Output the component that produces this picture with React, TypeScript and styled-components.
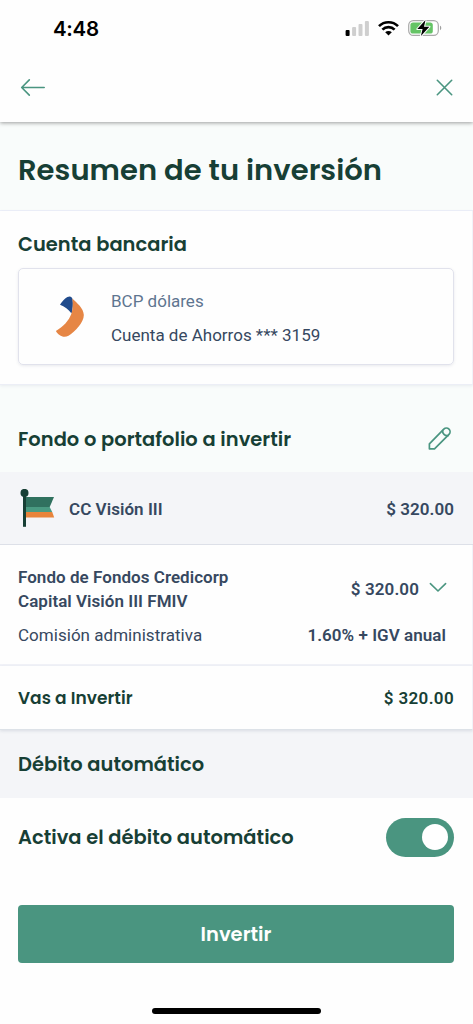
import React from "react";
import styled, { createGlobalStyle } from "styled-components";

const GlobalStyle = createGlobalStyle`
  * { box-sizing: border-box; }
  body { margin: 0; background: #fefefe; }
  h1, h2, p { margin: 0; }
  button { border: 0; padding: 0; background: none; font: inherit; cursor: pointer; }
  svg { display: block; flex: none; }
`;

const green = "#4a9580";
const ink = "#173f35";
const slate = "#364860";

const Screen = styled.main`
  display: flex;
  flex-direction: column;
  width: 473px;
  height: 1024px;
  overflow: hidden;
  background: #fefefe;
  color: ${slate};
  font: 400 17px/24px Roboto, sans-serif;
`;

const TopBar = styled.header`
  flex: none;
  height: 122px;
  background: #fefefe;
  box-shadow: 0 1px 4px rgba(0, 0, 0, 0.38);
  z-index: 1;
`;

const StatusBar = styled.div`
  display: flex;
  align-items: center;
  justify-content: space-between;
  height: 56px;
  padding: 1px 31px 0 53px;
`;

const Clock = styled.time`
  color: #000;
  font: 600 20.5px/24px Inter, sans-serif;
  letter-spacing: -0.3px;
`;

const StatusIcons = styled.div`
  display: flex;
  align-items: center;
  gap: 9px;
  padding-bottom: 1px;
`;

const NavBar = styled.nav`
  display: flex;
  align-items: center;
  justify-content: space-between;
  height: 63px;
  padding: 0 20px 0 20px;
`;

const TitleBand = styled.section`
  flex: none;
  height: 89px;
  padding: 31px 18px 0;
  background: #f9fcfb;
  border-bottom: 1px solid #edf0f9;
`;

const Heading = styled.h2<{ $size?: number }>`
  color: ${ink};
  font-family: Poppins, Inter, sans-serif;
  font-weight: 600;
  font-size: ${(p) => p.$size ?? 19.45}px;
  line-height: 34px;
  letter-spacing: 0.03px;
  white-space: nowrap;
`;

const BankSection = styled.section`
  flex: none;
  height: 174px;
  padding: 17px 18px 0;
  border-right: 1px solid #f1f2f8;
  border-bottom: 1px solid #eceef6;
  box-shadow: 0 1px 3px rgba(90, 100, 140, 0.1);
  z-index: 1;
`;

const AccountCard = styled.div`
  display: flex;
  align-items: center;
  width: 436px;
  height: 97px;
  margin-top: 6px;
  padding-left: 36px;
  border: 1.5px solid #e1e2ec;
  border-radius: 5px;
  box-shadow: 0 1px 3px rgba(80, 90, 120, 0.12);
`;

const AccountText = styled.div`
  display: flex;
  flex-direction: column;
  gap: 10px;
  margin-left: 26px;
  padding-top: 3px;
`;

const Line = styled.p<{ $muted?: boolean; $bold?: boolean; $track?: number; $color?: string }>`
  color: ${(p) => p.$color ?? (p.$muted ? "#5e7590" : slate)};
  font-weight: ${(p) => (p.$bold ? 600 : 400)};
  letter-spacing: ${(p) => p.$track ?? 0}px;
  white-space: nowrap;
`;

const FundHeader = styled.section`
  display: flex;
  flex: none;
  align-items: center;
  justify-content: space-between;
  height: 87px;
  padding: 21px 21px 0 18px;
  background: #f9fcfb;

  ${Heading} { padding-top: 2px; }
`;

const FundRow = styled.div`
  display: flex;
  flex: none;
  align-items: center;
  height: 73px;
  padding: 1px 19px 0 18px;
  background: #f4f5f8;
  border-bottom: 1px solid #dde0e8;

  > :last-child { margin-left: auto; }
`;

const FundName = styled.div`
  margin-left: 14px;
`;

const Detail = styled.section`
  flex: none;
  height: 121px;
  padding: 20px 25px 0 18px;
  border-right: 1px solid #f1f2f8;
  border-bottom: 2px solid #f2f3f9;
`;

const SplitRow = styled.div<{ $gap?: number }>`
  display: flex;
  align-items: center;
  justify-content: space-between;
  margin-top: ${(p) => p.$gap ?? 0}px;
  padding-right: ${(p) => (p.$gap ? 1 : 0)}px;
`;

const Amount = styled.div`
  display: flex;
  align-items: center;
  gap: 10px;

  svg { margin-bottom: 3px; }
`;

const TotalRow = styled.section`
  display: flex;
  flex: none;
  align-items: center;
  justify-content: space-between;
  height: 64px;
  padding: 0 18px 0;
  border-right: 1px solid #f1f2f8;
  border-bottom: 1px solid #dde2e8;
  box-shadow: 0 1px 3px rgba(60, 80, 110, 0.15);
  z-index: 1;
`;

const DebitHeader = styled.section`
  flex: none;
  height: 68px;
  padding: 18px 18px 0;
  background: #f4f5f8;
`;

const ToggleRow = styled.section`
  display: flex;
  flex: none;
  align-items: center;
  justify-content: space-between;
  height: 78px;
  padding: 0 19px 0 18px;

  ${Heading} { padding-top: 2px; }
`;

const Toggle = styled.button`
  display: flex;
  align-items: center;
  justify-content: flex-end;
  width: 68px;
  height: 39px;
  padding-right: 6px;
  border-radius: 20px;
  background: ${green};
`;

const Knob = styled.span`
  width: 26px;
  height: 26px;
  border-radius: 50%;
  background: #fff;
`;

const InvestButton = styled.button`
  flex: none;
  width: 436px;
  height: 58px;
  margin: 29px 0 0 18px;
  padding-top: 2px;
  border-radius: 4px;
  background: ${green};
  color: #fff;
  font-family: Poppins, Inter, sans-serif;
  font-weight: 600;
  font-size: 19.5px;
`;

const HomeIndicator = styled.div`
  flex: none;
  width: 169px;
  height: 6px;
  margin: 45px auto 0;
  border-radius: 3px;
  background: #000;
`;

const Signal = () => (
  <svg width="24" height="16" viewBox="0 0 24 16">
    <rect x="0.6" y="10" width="4" height="6" rx="1" fill="#000" />
    <rect x="7.1" y="7" width="4" height="9" rx="1" fill="#cfcfcf" />
    <rect x="13.5" y="4" width="4" height="12" rx="1" fill="#cfcfcf" />
    <rect x="19.9" y="0.9" width="4" height="15.1" rx="1" fill="#cfcfcf" />
  </svg>
);

const Wifi = () => (
  <svg width="21" height="16" viewBox="0 0 21 16" fill="none" stroke="#000" strokeWidth="2.7">
    <path d="M1 6.1a13.6 13.6 0 0 1 19 0" />
    <path d="M4.4 9.6a8.7 8.7 0 0 1 12.2 0" />
    <path d="M10.5 15.6 7.2 12.3a4.7 4.7 0 0 1 6.6 0Z" fill="#000" stroke="none" />
  </svg>
);

const Battery = () => (
  <svg width="34" height="18" viewBox="0 0 34 18">
    <rect x="0.7" y="1.6" width="29.6" height="14.8" rx="4.6" fill="#fff" stroke="#a9a9a9" strokeWidth="1.2" />
    <path d="M32 6.8c1.7.5 1.7 3.9 0 4.4Z" fill="#a0a0a0" />
    <rect x="2.4" y="3.4" width="22.4" height="11.2" rx="2.7" fill="#65c466" />
    <path d="M17.5.9 9.3 10.1h5.3l-1.7 7 8.5-9.3h-5.4Z" fill="#000" stroke="#fff" strokeWidth="2" strokeLinejoin="round" paintOrder="stroke" />
  </svg>
);

const BackArrow = () => (
  <svg width="26" height="20" viewBox="0 0 26 20" fill="none" stroke={green} strokeWidth="1.6" strokeLinecap="round" strokeLinejoin="round">
    <path d="M24.2 9.5H1.8M9.3 1.9 1.7 9.5l7.6 7.6" />
  </svg>
);

const Close = () => (
  <svg width="17" height="18" viewBox="0 0 17 18" fill="none" stroke={green} strokeWidth="1.6" strokeLinecap="round">
    <path d="m1.3 1.3 14.4 14.4M15.7 1.3 1.3 15.7" />
  </svg>
);

const BankLogo = () => (
  <svg width="30" height="42" viewBox="0 0 30 42">
    <path d="M5 8.8C8 3.6 12 .4 14.6.4c1.5 0 2.6 1.3 3 2.8.7 4.8.2 9.9-1.1 14.4C13.8 13.6 9.4 10.4 5 8.8Z" fill="#204b8c" />
    <path d="M17.3 2.5C22 7 28.5 12.2 28.8 18.8c.3 7-8.4 16.5-15.3 20.9C8.4 42.6 3.3 39.2.9 35 8 31.2 14 24.6 16.5 17.6 18 12.6 18.1 7.4 17.3 2.5Z" fill="#e68645" />
  </svg>
);

const Pencil = () => (
  <svg width="24" height="24" viewBox="0 0 24 24" fill="none" stroke={green} strokeWidth="1.7" strokeLinecap="round" strokeLinejoin="round">
    <path d="M1.4 21.8v-5L15.8 2.2a3.7 3.7 0 0 1 5.2 0 3.7 3.7 0 0 1 0 5.2L6.5 21.8Z" />
    <path d="M14.7 3.5c-.6 2.7 2.3 5.8 5.3 5.1" />
  </svg>
);

const Flag = () => (
  <svg width="37" height="40" viewBox="0 0 37 40">
    <path d="M7 8h29l-4.3 10H7Z" fill="#30715f" />
    <path d="M7 18h24.7l2.6 5.3H7Z" fill="#4a9b82" />
    <path d="M7 23.1h27.2l2 5.4H7Z" fill="#e8843b" />
    <path d="M5 4h3v33.8H5Z" fill={ink} />
    <circle cx="6.5" cy="3.9" r="4" fill={ink} />
  </svg>
);

const ChevronDown = () => (
  <svg width="18" height="12" viewBox="0 0 18 12" fill="none" stroke={green} strokeWidth="1.6" strokeLinecap="round" strokeLinejoin="round">
    <path d="m1.4 1.6 7.6 7.4 7.6-7.4" />
  </svg>
);

export default function App() {
  return (
    <>
      <GlobalStyle />
      <Screen>
        <TopBar>
          <StatusBar>
            <Clock>4:48</Clock>
            <StatusIcons><Signal /><Wifi /><Battery /></StatusIcons>
          </StatusBar>
          <NavBar>
            <button aria-label="Volver"><BackArrow /></button>
            <button aria-label="Cerrar"><Close /></button>
          </NavBar>
        </TopBar>
        <TitleBand>
          <Heading as="h1" $size={29}>Resumen de tu inversión</Heading>
        </TitleBand>
        <BankSection>
          <Heading>Cuenta bancaria</Heading>
          <AccountCard>
            <BankLogo />
            <AccountText>
              <Line $muted>BCP dólares</Line>
              <Line>Cuenta de Ahorros *** 3159</Line>
            </AccountText>
          </AccountCard>
        </BankSection>
        <FundHeader>
          <Heading>Fondo o portafolio a invertir</Heading>
          <button aria-label="Editar"><Pencil /></button>
        </FundHeader>
        <FundRow>
          <Flag />
          <FundName><Line $bold $track={0.05}>CC Visión III</Line></FundName>
          <Line $bold $track={0.05}>$ 320.00</Line>
        </FundRow>
        <Detail>
          <SplitRow>
            <Line $bold $track={0.04}>Fondo de Fondos Credicorp<br />Capital Visión III FMIV</Line>
            <Amount><Line $bold $track={0.1}>$ 320.00</Line><ChevronDown /></Amount>
          </SplitRow>
          <SplitRow $gap={10}>
            <Line $track={0.03}>Comisión administrativa</Line>
            <Line $bold $track={0.05}>1.60% + IGV anual</Line>
          </SplitRow>
        </Detail>
        <TotalRow>
          <Heading $size={17}>Vas a Invertir</Heading>
          <Line $bold $color={ink} $track={0.35}>$ 320.00</Line>
        </TotalRow>
        <DebitHeader>
          <Heading>Débito automático</Heading>
        </DebitHeader>
        <ToggleRow>
          <Heading>Activa el débito automático</Heading>
          <Toggle role="switch" aria-checked="true" aria-label="Débito automático"><Knob /></Toggle>
        </ToggleRow>
        <InvestButton>Invertir</InvestButton>
        <HomeIndicator />
      </Screen>
    </>
  );
}
